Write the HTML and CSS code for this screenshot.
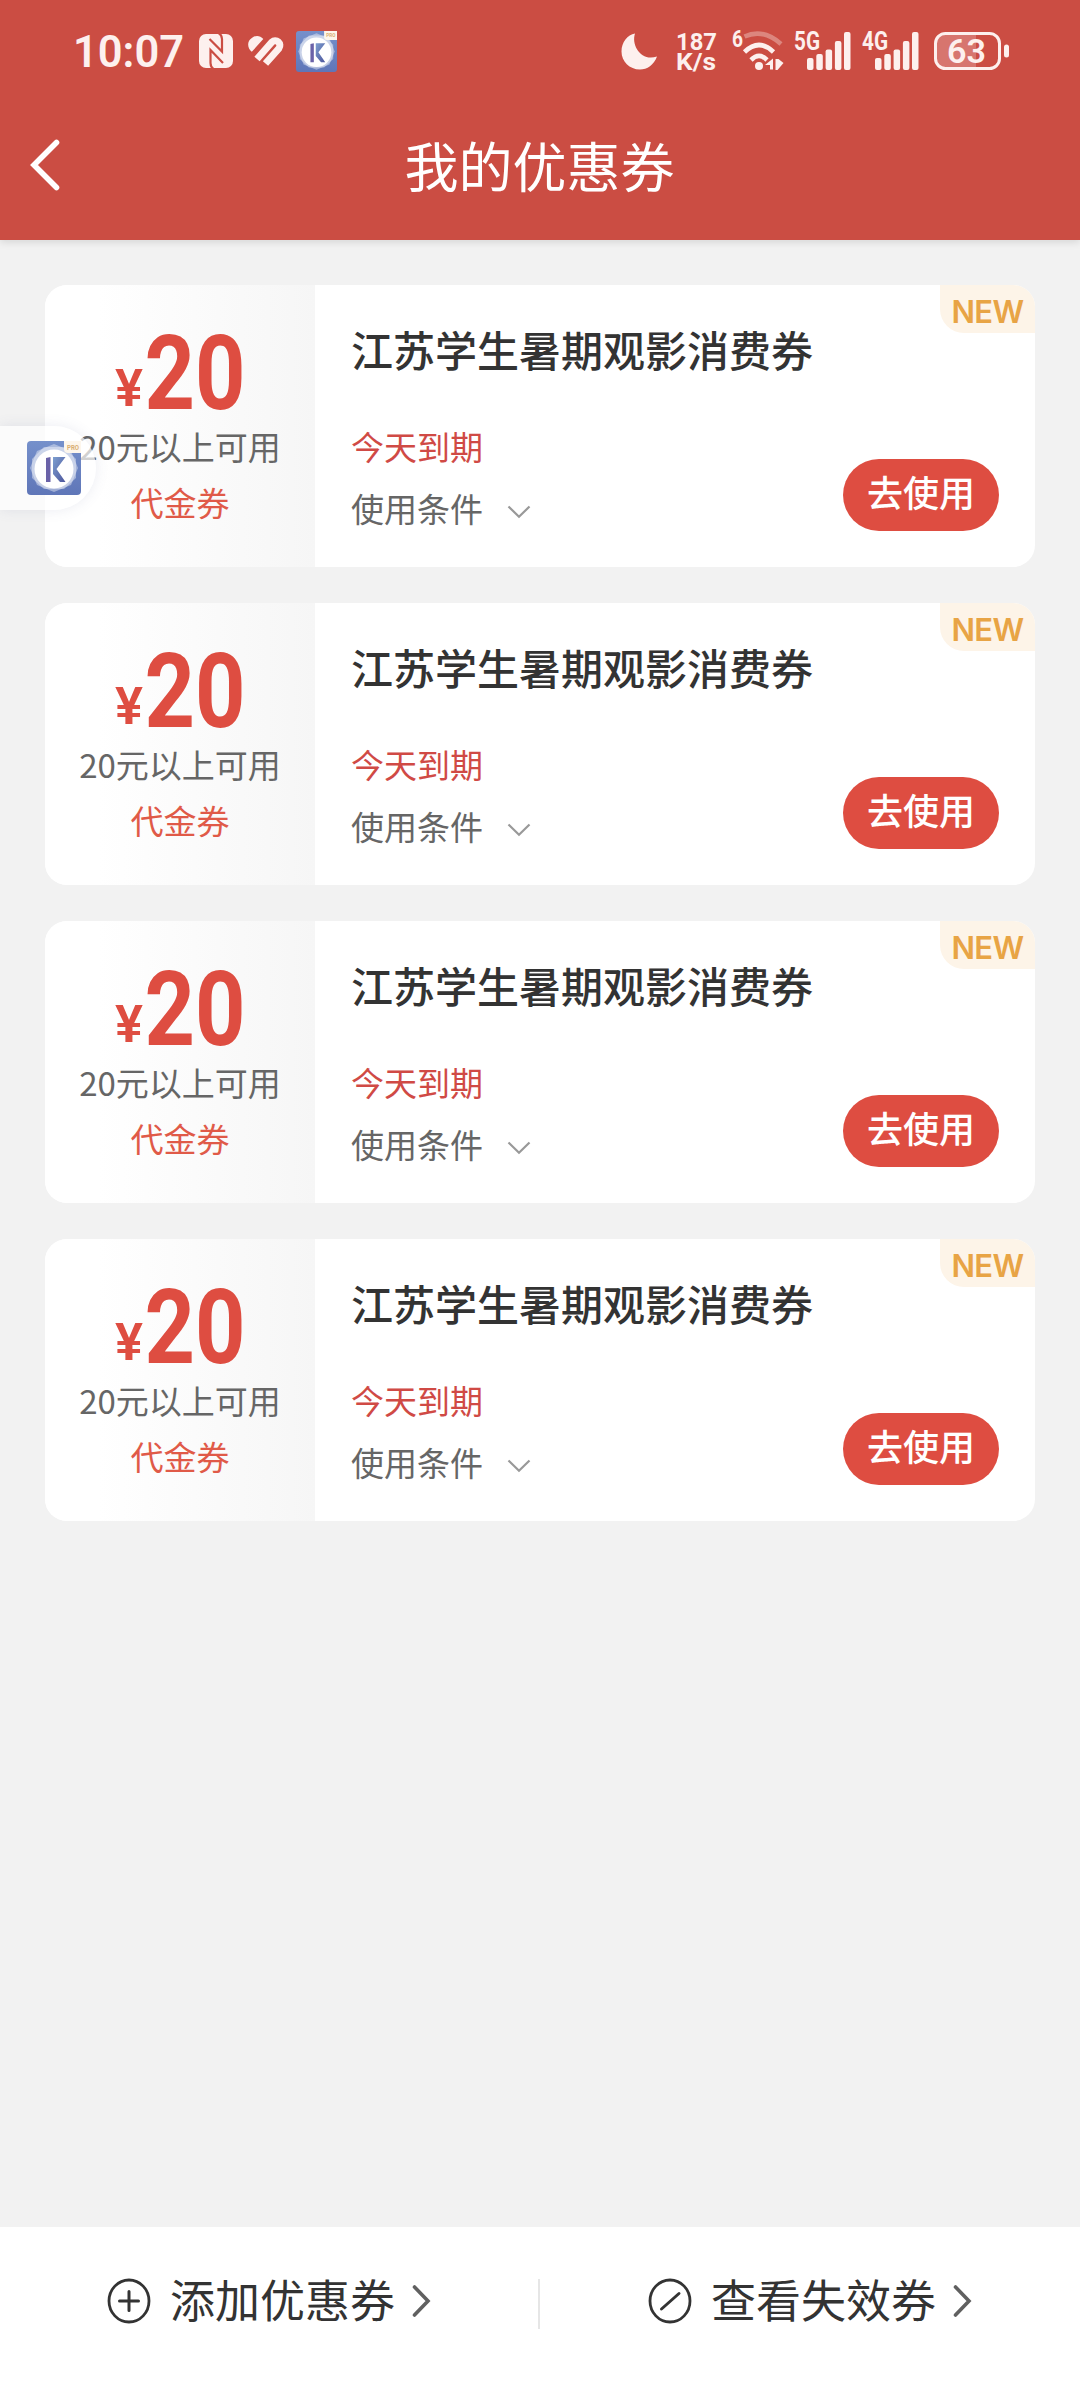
FILE: index.html
```html
<!DOCTYPE html>
<html lang="zh-CN">
<head>
<meta charset="utf-8">
<title>我的优惠券</title>
<link rel="stylesheet" href="styles.css">
</head>
<body>
<svg class="defs" width="0" height="0" aria-hidden="true">
  <defs>
    <linearGradient id="logo-bg" x1="0" y1="0" x2="0" y2="1">
      <stop offset="0" stop-color="#7590cb"/>
      <stop offset="1" stop-color="#5f76b8"/>
    </linearGradient>
    <linearGradient id="logo-k" x1="0" y1="0" x2="1" y2="1">
      <stop offset="0" stop-color="#7d9fd0"/>
      <stop offset="1" stop-color="#4d559c"/>
    </linearGradient>
    <symbol id="logo" viewBox="0 0 54 54">
      <rect width="54" height="54" rx="4" fill="url(#logo-bg)"/>
      <path d="M27 3L44 10L51 27L44 44L27 51L10 44L3 27L10 10Z" fill="#fff" fill-opacity=".4"/>
      <path d="M17 6L37 6L49 18L49 37L37 48L17 48L5 37L5 18Z" fill="#fff" fill-opacity=".4"/>
      <circle cx="27" cy="28" r="19.500" fill="#fff"/>
      <path d="M19 17L23.500 16V41H19Z" fill="#6a62a8"/>
      <path d="M26 16H38.500L29.500 28L38.500 41H33L26 33Z" fill="url(#logo-k)"/>
      <path d="M37 0H54V12H41Q37 12 37 8Z" fill="#fdf6ec"/>
      <text x="40" y="8.500" class="logo-pro" textLength="12" lengthAdjust="spacingAndGlyphs">PRO</text>
    </symbol>
    <symbol id="bars" viewBox="0 0 44 38">
      <g fill="#fdf0ee">
        <rect x="0" y="26" width="6.500" height="12" rx="2"/>
        <rect x="9.300" y="22" width="6.500" height="16" rx="2"/>
        <rect x="18.600" y="17.500" width="6.500" height="20.500" rx="2"/>
        <rect x="27.900" y="9" width="6.500" height="29" rx="2"/>
        <rect x="37" y="0" width="6.500" height="38" rx="2"/>
      </g>
    </symbol>
    <symbol id="chevron-down" viewBox="0 0 24 14">
      <path d="M1.500 1.500L12 11.800L22.500 1.500" fill="none" stroke="#999" stroke-width="2.200"/>
    </symbol>
    <symbol id="chevron-right" viewBox="0 0 20 32">
      <path d="M2.500 2L16 16L2.500 30" fill="none" stroke="#606060" stroke-width="3.600" stroke-linecap="round"/>
    </symbol>
    <symbol id="price" viewBox="0 0 130 80">
      <text x="0" y="73" class="price-yen" textLength="28" lengthAdjust="spacingAndGlyphs">¥</text>
      <text x="29.500" y="75.500" class="price-num" textLength="101" lengthAdjust="spacingAndGlyphs">20</text>
    </symbol>
  </defs>
</svg>

<header class="header">
  <div class="status">
    <div class="status-left">
      <svg class="time" width="110" height="40" viewBox="0 0 110 40"><text x="-2" y="35" class="t-time" textLength="111" lengthAdjust="spacingAndGlyphs">10:07</text></svg>
      <svg class="nfc" width="34" height="34" viewBox="0 0 34 34">
        <rect width="34" height="34" rx="7" fill="#fdf0ee"/>
        <path d="M10.500 5L23 17.500V5Q23 1 19.500 -1M14.500 35Q11.500 33 11.500 29V16L24 29" fill="none" stroke="#cb4d43" stroke-width="2.200"/>
      </svg>
      <svg class="heart" width="37" height="32" viewBox="0 0 37 32">
        <path d="M9 24L24 7A4.700 4.700 0 0 1 31 13.200L17.500 28.500" fill="none" stroke="#fdf0ee" stroke-width="7"/>
        <path d="M3.800 16.800C-1 13 -1 6 3.500 3.200C7 0 12 0 15.300 4Z" fill="#fdf0ee"/>
      </svg>
      <svg class="logo-small" width="41" height="41"><use href="#logo"/></svg>
    </div>
    <div class="status-right">
      <svg class="moon" width="37" height="37" viewBox="0 0 37 37"><path d="M14 0.500C10 12 20 29 36 23.500C33 32 26 36.500 19 36.500C8.500 36.500 0.500 28.500 0.500 18.500C0.500 9 6.500 2 14 0.500Z" fill="#fdf0ee"/></svg>
      <svg class="speed" width="42" height="40" viewBox="0 0 42 40">
        <text x="0" y="18.500" class="t-small" textLength="41" lengthAdjust="spacingAndGlyphs">187</text>
        <text x="0" y="38.500" class="t-small" textLength="40" lengthAdjust="spacingAndGlyphs">K/s</text>
      </svg>
      <svg class="wifi" width="52" height="42" viewBox="0 0 52 42">
        <text x="0" y="17" class="t-small" textLength="11" lengthAdjust="spacingAndGlyphs">6</text>
        <g fill="none" stroke="#fdf0ee" stroke-width="4.600">
          <path d="M12.500 6.500Q31 -2 49 14" stroke-opacity=".35"/>
          <path d="M12.500 22Q27 8 41.500 22"/>
          <path d="M19 30Q27 22 35 30"/>
        </g>
        <circle cx="27" cy="36" r="4" fill="#fdf0ee"/>
        <path d="M33 35L41 28.500V39.500H38V35ZM43.500 29H46.500L51.500 33L45.500 40H43.500Z" fill="#fdf0ee"/>
      </svg>
      <svg class="signal" width="58" height="40" viewBox="0 0 58 40">
        <text x="0" y="19" class="t-gen" textLength="26" lengthAdjust="spacingAndGlyphs">5G</text>
        <use href="#bars" x="13" y="1" width="44" height="38"/>
      </svg>
      <svg class="signal" width="58" height="40" viewBox="0 0 58 40">
        <text x="0" y="19" class="t-gen" textLength="26" lengthAdjust="spacingAndGlyphs">4G</text>
        <use href="#bars" x="13" y="1" width="44" height="38"/>
      </svg>
      <svg class="battery" width="76" height="38" viewBox="0 0 76 38">
        <path d="M11 2H42V36H11Q2 36 2 27V11Q2 2 11 2Z" fill="#fdf0ee" fill-opacity=".25"/>
        <rect x="1.500" y="1.500" width="64" height="35" rx="10" fill="none" stroke="#fdf0ee" stroke-width="3"/>
        <rect x="70" y="12.500" width="5" height="13" rx="2.500" fill="#fdf0ee"/>
        <text x="13" y="31" class="t-batt" textLength="39" lengthAdjust="spacingAndGlyphs">63</text>
      </svg>
    </div>
  </div>
  <div class="navbar">
    <svg class="back" width="32" height="54" viewBox="0 0 32 54"><path d="M28.500 4.500L6 27L28.500 49.500" fill="none" stroke="#fff" stroke-width="5.600" stroke-linecap="round" stroke-linejoin="miter"/></svg>
    <h1 class="title">我的优惠券</h1>
  </div>
</header>

<main class="list">
  <article class="coupon">
    <div class="value">
      <svg class="price" width="130" height="80"><use href="#price"/></svg>
      <p class="limit">20元以上可用</p>
      <p class="kind">代金券</p>
    </div>
    <div class="detail">
      <h2 class="name">江苏学生暑期观影消费券</h2>
      <p class="expiry">今天到期</p>
      <p class="terms">使用条件<svg class="down" width="24" height="14"><use href="#chevron-down"/></svg></p>
    </div>
    <button class="use">去使用</button>
    <span class="new">NEW</span>
  </article>
  <article class="coupon">
    <div class="value">
      <svg class="price" width="130" height="80"><use href="#price"/></svg>
      <p class="limit">20元以上可用</p>
      <p class="kind">代金券</p>
    </div>
    <div class="detail">
      <h2 class="name">江苏学生暑期观影消费券</h2>
      <p class="expiry">今天到期</p>
      <p class="terms">使用条件<svg class="down" width="24" height="14"><use href="#chevron-down"/></svg></p>
    </div>
    <button class="use">去使用</button>
    <span class="new">NEW</span>
  </article>
  <article class="coupon">
    <div class="value">
      <svg class="price" width="130" height="80"><use href="#price"/></svg>
      <p class="limit">20元以上可用</p>
      <p class="kind">代金券</p>
    </div>
    <div class="detail">
      <h2 class="name">江苏学生暑期观影消费券</h2>
      <p class="expiry">今天到期</p>
      <p class="terms">使用条件<svg class="down" width="24" height="14"><use href="#chevron-down"/></svg></p>
    </div>
    <button class="use">去使用</button>
    <span class="new">NEW</span>
  </article>
  <article class="coupon">
    <div class="value">
      <svg class="price" width="130" height="80"><use href="#price"/></svg>
      <p class="limit">20元以上可用</p>
      <p class="kind">代金券</p>
    </div>
    <div class="detail">
      <h2 class="name">江苏学生暑期观影消费券</h2>
      <p class="expiry">今天到期</p>
      <p class="terms">使用条件<svg class="down" width="24" height="14"><use href="#chevron-down"/></svg></p>
    </div>
    <button class="use">去使用</button>
    <span class="new">NEW</span>
  </article>
</main>

<footer class="footer">
  <a class="action">
    <svg width="44" height="46" viewBox="0 0 44 46"><ellipse cx="22" cy="23" rx="20" ry="21" fill="none" stroke="#333" stroke-width="2.800"/><path d="M12.500 23H31.500M22 13.500V32.500" stroke="#333" stroke-width="3" stroke-linecap="round"/></svg>
    <span class="label">添加优惠券</span>
    <svg width="20" height="32"><use href="#chevron-right"/></svg>
  </a>
  <a class="action second">
    <svg width="44" height="46" viewBox="0 0 44 46"><ellipse cx="22" cy="23" rx="20" ry="21" fill="none" stroke="#333" stroke-width="2.800"/><path d="M13.500 31L31 15.500" stroke="#333" stroke-width="3" stroke-linecap="round"/></svg>
    <span class="label">查看失效券</span>
    <svg width="20" height="32"><use href="#chevron-right"/></svg>
  </a>
</footer>

<div class="floater"><svg width="54" height="54"><use href="#logo"/></svg></div>
</body>
</html>
```
FILE: styles.css
```css
* { box-sizing: border-box; margin: 0; padding: 0; }

body {
  position: relative;
  display: flex;
  flex-direction: column;
  width: 1080px;
  height: 2400px;
  overflow: hidden;
  background: #f2f2f2;
  font-family: "Noto Sans CJK SC", sans-serif;
  color: #333;
}

svg { display: block; flex: none; }
.defs { position: absolute; }

.header {
  height: 240px;
  background: #cb4d43;
  box-shadow: 0 2px 8px rgba(0, 0, 0, .12);
}

.status {
  display: flex;
  justify-content: space-between;
  align-items: flex-start;
  height: 100px;
  padding: 31px 70px 0 75px;
}
.status-left, .status-right { display: flex; align-items: flex-start; }
.time, .speed, .wifi, .signal { overflow: visible; }
.time { margin-top: 1px; }
.nfc { margin: 3px 0 0 14px; }
.heart { margin: 4px 0 0 15px; }
.logo-small { margin-left: 11px; }
.moon { margin: 2px 18px 0 0; }
.speed { margin-right: 14px; }
.wifi { margin: -1px 10px 0 0; }
.signal { margin-right: 10px; }
.battery { margin-left: 4px; margin-top: 1px; }

.t-time, .t-small, .t-gen, .t-batt { font-family: Roboto, sans-serif; fill: #fdf0ee; }
.t-time { font-size: 45px; font-weight: 600; }
.t-small { font-size: 24px; font-weight: 700; }
.t-gen { font-size: 26px; font-weight: 700; }
.t-batt { font-size: 34px; font-weight: 600; }
.logo-pro { font-family: Roboto, sans-serif; font-size: 7px; font-weight: 700; fill: #d9ae72; }

.navbar {
  display: grid;
  grid-template-columns: 80px 1fr 80px;
  align-items: center;
  height: 130px;
}
.back { margin-left: 28px; }
.title {
  padding-right: 1px;
  text-align: center;
  font-size: 54px;
  font-weight: 400;
  line-height: 80px;
  color: #fff;
}

.list {
  flex: 1;
  display: flex;
  flex-direction: column;
  gap: 36px;
  padding: 45px 45px 0;
}

.coupon {
  position: relative;
  display: flex;
  height: 282px;
  border-radius: 22px;
  overflow: hidden;
  background: #fff;
}
.value {
  width: 270px;
  display: flex;
  flex-direction: column;
  align-items: center;
  padding-top: 48px;
  background: linear-gradient(90deg, #fff 20%, #f6f6f6);
}
.price { overflow: visible; }
.price-yen { font-family: Roboto, sans-serif; font-size: 52px; font-weight: 600; fill: #de4d41; }
.price-num { font-family: Roboto, sans-serif; font-size: 103px; font-weight: 700; fill: #de4d41; }
.limit { margin-top: 9px; font-size: 33px; line-height: 48px; color: #666; white-space: nowrap; }
.kind { margin-top: 8px; font-size: 33px; line-height: 48px; color: #e05a48; }

.detail { flex: 1; padding: 33px 0 0 36px; }
.name { font-size: 42px; font-weight: 500; line-height: 62px; }
.expiry { margin-top: 42px; font-size: 33px; line-height: 48px; color: #d04a45; }
.terms { display: flex; align-items: center; margin-top: 14px; font-size: 33px; line-height: 48px; color: #666; }
.down { margin: 7px 0 0 24px; }

.use {
  align-self: flex-end;
  width: 156px;
  height: 72px;
  margin: 0 36px 36px 0;
  padding-bottom: 8px;
  border: 0;
  border-radius: 36px;
  background: #de4d41;
  color: #fff;
  font: 500 36px/60px "Noto Sans CJK SC", sans-serif;
}
.new {
  position: absolute;
  top: 0;
  right: 0;
  width: 95px;
  height: 48px;
  border-bottom-left-radius: 24px;
  background: #fdf4e8;
  color: #e8a445;
  text-align: center;
  font: 600 31px/53px Inter, sans-serif;
  letter-spacing: -.6px;
}

.footer {
  display: flex;
  height: 173px;
  padding-bottom: 24px;
  background: #fff;
}
.action {
  position: relative;
  flex: 1;
  display: flex;
  align-items: center;
  padding-left: 107px;
}
.action svg { margin-top: -1px; }
.second { padding-left: 109px; }
.second::before {
  content: "";
  position: absolute;
  left: -1px;
  top: 52px;
  width: 2px;
  height: 50px;
  background: #e6e6e6;
}
.label { margin: -5px 17px 0 19px; font-size: 45px; line-height: 66px; }

.floater {
  position: absolute;
  left: 0;
  top: 426px;
  width: 96px;
  height: 84px;
  padding: 15px 0 0 27px;
  border-radius: 0 42px 42px 0;
  background: rgba(255, 255, 255, .7);
  box-shadow: 0 0 14px rgba(90, 100, 150, .12);
}
```
